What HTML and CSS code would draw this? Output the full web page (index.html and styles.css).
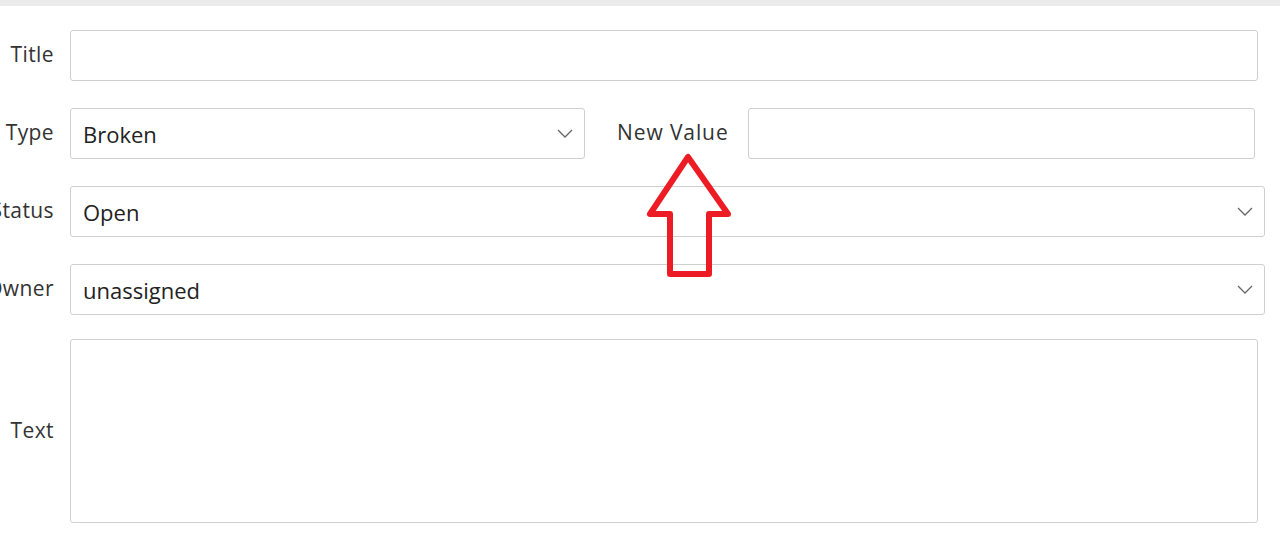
FILE: index.html
```html
<!DOCTYPE html>
<html lang="en">
<head>
    <meta charset="UTF-8">
    <title>Issue</title>
    <link rel="stylesheet" href="styles.css">
</head>
<body>
    <div class="top-bar"></div>

    <form class="issue-form">
        <div class="form-row">
            <label class="field-label">Title</label>
            <input class="field-input field-wide" type="text">
        </div>

        <div class="form-row">
            <label class="field-label">Type</label>
            <div class="select-wrap select-type">
                <select class="field-select">
                    <option>Broken</option>
                </select>
                <svg class="chevron" width="16" height="9" viewBox="0 0 16 9"><path d="M1 1 L8 8 L15 1" fill="none" stroke="#666" stroke-width="1.3"/></svg>
            </div>
            <label class="value-label">New Value</label>
            <input class="field-input value-input" type="text">
        </div>

        <div class="form-row">
            <label class="field-label">Status</label>
            <div class="select-wrap">
                <select class="field-select">
                    <option>Open</option>
                </select>
                <svg class="chevron" width="16" height="9" viewBox="0 0 16 9"><path d="M1 1 L8 8 L15 1" fill="none" stroke="#666" stroke-width="1.3"/></svg>
            </div>
        </div>

        <div class="form-row">
            <label class="field-label">Owner</label>
            <div class="select-wrap">
                <select class="field-select">
                    <option>unassigned</option>
                </select>
                <svg class="chevron" width="16" height="9" viewBox="0 0 16 9"><path d="M1 1 L8 8 L15 1" fill="none" stroke="#666" stroke-width="1.3"/></svg>
            </div>
        </div>

        <div class="form-row text-row">
            <label class="field-label">Text</label>
            <textarea class="field-input field-wide field-text"></textarea>
        </div>

        <!-- annotation arrow drawn over the form -->
        <svg class="arrow" width="100" height="140" viewBox="0 0 100 140">
            <path d="M48 6 L10 63 L30 63 L30 123 L69 123 L69 63 L88 63 Z" fill="none" stroke="#ed1c24" stroke-width="6" stroke-linejoin="round"/>
        </svg>
    </form>
</body>
</html>
```

FILE: styles.css
```css
* {
    margin: 0;
    padding: 0;
    box-sizing: border-box;
}

body {
    font-family: 'Open Sans', sans-serif;
    background: white;
    color: #333;
    overflow: hidden;
}

.top-bar {
    height: 6px;
    background: #ebebeb;
}

.issue-form {
    position: relative;
    padding: 24px 15px 0 0;
    display: flex;
    flex-direction: column;
    gap: 27px;
}

.form-row {
    display: flex;
    align-items: center;
    gap: 16px;
}

.text-row {
    margin-top: -3px;
}

.field-label {
    width: 54px;
    flex-shrink: 0;
    display: flex;
    justify-content: flex-end;
    white-space: nowrap;
    font-size: 21px;
    letter-spacing: 0.4px;
    color: #333;
    margin-top: -3px;
}

.field-input,
.field-select {
    height: 51px;
    border: 1px solid #cfcfcf;
    border-radius: 3px;
    background: white;
    font-family: 'Open Sans', sans-serif;
    font-size: 22px;
    color: #222;
    padding: 0 12px;
    outline: none;
}

.field-wide {
    flex: 1;
    margin-right: 7px;
}

.field-text {
    height: 184px;
    resize: none;
}

.select-wrap {
    position: relative;
    flex: 1;
}

.field-select {
    width: 100%;
    appearance: none;
    -webkit-appearance: none;
}

.chevron {
    position: absolute;
    right: 12px;
    top: 21px;
    pointer-events: none;
}

.select-type {
    flex: 0 0 515px;
}

.value-label {
    margin-left: 16px;
    margin-right: 3px;
    margin-top: -4px;
    font-size: 21px;
    letter-spacing: 0.9px;
    color: #333;
    white-space: nowrap;
}

.value-input {
    flex: 1;
    margin-right: 10px;
}

.arrow {
    position: absolute;
    left: 640px;
    top: 145px;
}
```
